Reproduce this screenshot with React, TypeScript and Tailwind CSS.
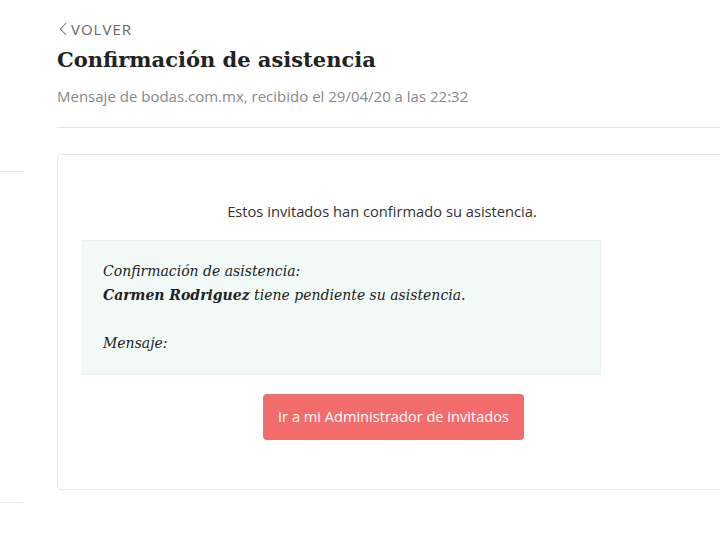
import { ChevronLeft } from 'lucide-react';

export default function App() {
  return (
    <div className="min-h-[559px] w-[720px] overflow-hidden bg-white font-['Open_Sans',sans-serif]">
      <div className="flex">
        <aside className="mt-[171px] h-[332px] w-[23px] shrink-0 border-y border-[#e6e6e6]" />

        <main className="ml-[34px] flex-1 pt-[18px]">
          <a href="#" className="flex items-center text-[15px] leading-5 tracking-[1px] text-[#666]">
            <ChevronLeft className="-ml-[5px] h-[22px] w-[22px]" strokeWidth={1.1} />
            <span className="-ml-[3px]">VOLVER</span>
          </a>
          <h1 className="mt-[4px] font-['DejaVu_Serif',serif] text-[21px] font-bold leading-8 text-[#222]">
            Confirmación de asistencia
          </h1>
          <p className="mt-[10px] text-[15px] leading-5 text-[#888]">
            Mensaje de bodas.com.mx, recibido el 29/04/20 a las 22:32
          </p>

          <div className="mt-[21px] border-t border-[#e4e4e4]" />

          <section className="mt-[26px] -mr-[20px] h-[336px] rounded-[4px] border border-[#e6e6e6] px-[24px] pt-[46px]">
            <div className="w-[600px]">
              <p className="text-center text-[14.7px] leading-5 text-[#333]">
                Estos invitados han confirmado su asistencia.
              </p>

              <div className="mt-[19px] w-[519px] border border-[#e9f2f0] bg-[#f2faf8] px-[20px] pb-[19px] pt-[18px] font-['DejaVu_Serif',serif] text-[14px] italic leading-6 text-[#222]">
                <p>Confirmación de asistencia:</p>
                <p>
                  <strong className="font-bold">Carmen Rodriguez</strong> tiene pendiente su asistencia.
                </p>
                <p className="mt-6">Mensaje:</p>
              </div>

              <div className="mt-[19px] flex pl-[181px]">
                <a
                  href="#"
                  className="flex h-[46px] w-[261px] items-center justify-center rounded-[4px] bg-[#f36c6c] text-[14.6px] text-white"
                >
                  Ir a mi Administrador de invitados
                </a>
              </div>
            </div>
          </section>
        </main>
      </div>
    </div>
  );
}
